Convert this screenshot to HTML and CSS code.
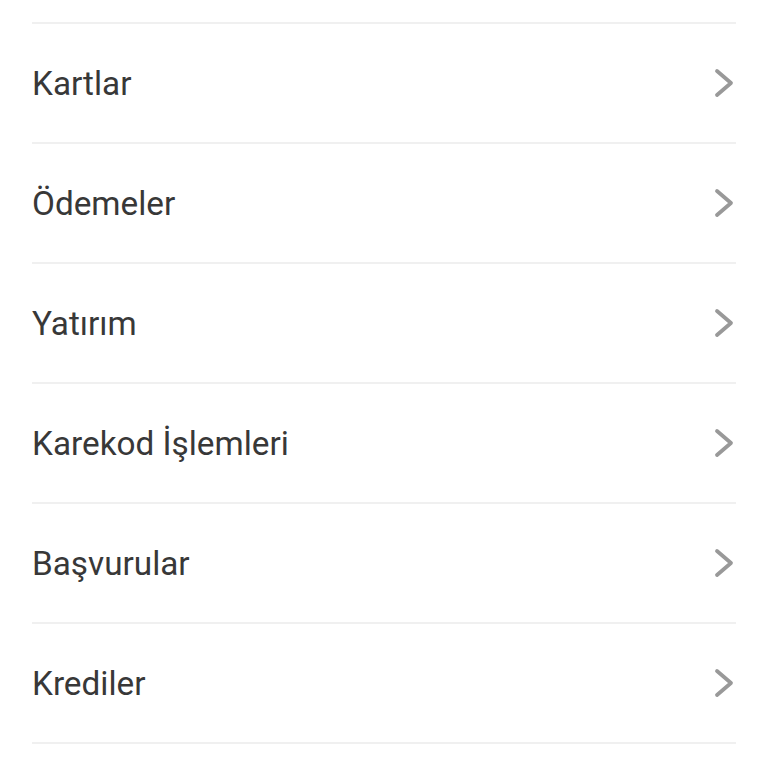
FILE: index.html
```html
<!DOCTYPE html>
<html lang="tr">
<head>
    <meta charset="UTF-8">
    <meta name="viewport" content="width=device-width, initial-scale=1.0">
    <title>Menü</title>
    <link rel="stylesheet" href="styles.css">
</head>
<body>
    <ul class="menu">
        <li class="menu-item">
            <span class="menu-label">Kartlar</span>
            <svg class="chevron" viewBox="0 0 22 30"><path d="M4 3 L18 15 L4 27"/></svg>
        </li>
        <li class="menu-item">
            <span class="menu-label">Ödemeler</span>
            <svg class="chevron" viewBox="0 0 22 30"><path d="M4 3 L18 15 L4 27"/></svg>
        </li>
        <li class="menu-item">
            <span class="menu-label">Yatırım</span>
            <svg class="chevron" viewBox="0 0 22 30"><path d="M4 3 L18 15 L4 27"/></svg>
        </li>
        <li class="menu-item">
            <span class="menu-label">Karekod İşlemleri</span>
            <svg class="chevron" viewBox="0 0 22 30"><path d="M4 3 L18 15 L4 27"/></svg>
        </li>
        <li class="menu-item">
            <span class="menu-label">Başvurular</span>
            <svg class="chevron" viewBox="0 0 22 30"><path d="M4 3 L18 15 L4 27"/></svg>
        </li>
        <li class="menu-item">
            <span class="menu-label">Krediler</span>
            <svg class="chevron" viewBox="0 0 22 30"><path d="M4 3 L18 15 L4 27"/></svg>
        </li>
    </ul>
</body>
</html>
```

FILE: styles.css
```css
/* Menü listesi */
body {
    margin: 0;
    padding: 22px 32px 0;
    background-color: #ffffff;
    font-family: Roboto, 'Noto Sans', sans-serif;
    color: #383838;
}
.menu {
    list-style: none;
    margin: 0;
    padding: 0;
    border-top: 2px solid #f0f0f0;
}
.menu-item {
    display: flex;
    align-items: center;
    justify-content: space-between;
    height: 118px;
    border-bottom: 2px solid #f0f0f0;
}
.menu-label {
    font-size: 33.3px;
    line-height: 1;
    padding-top: 1px;
}
.chevron {
    width: 22px;
    height: 30px;
    margin-right: 1px;
    fill: none;
    stroke: #999999;
    stroke-width: 3.8;
    stroke-linecap: round;
    stroke-linejoin: round;
}
```
